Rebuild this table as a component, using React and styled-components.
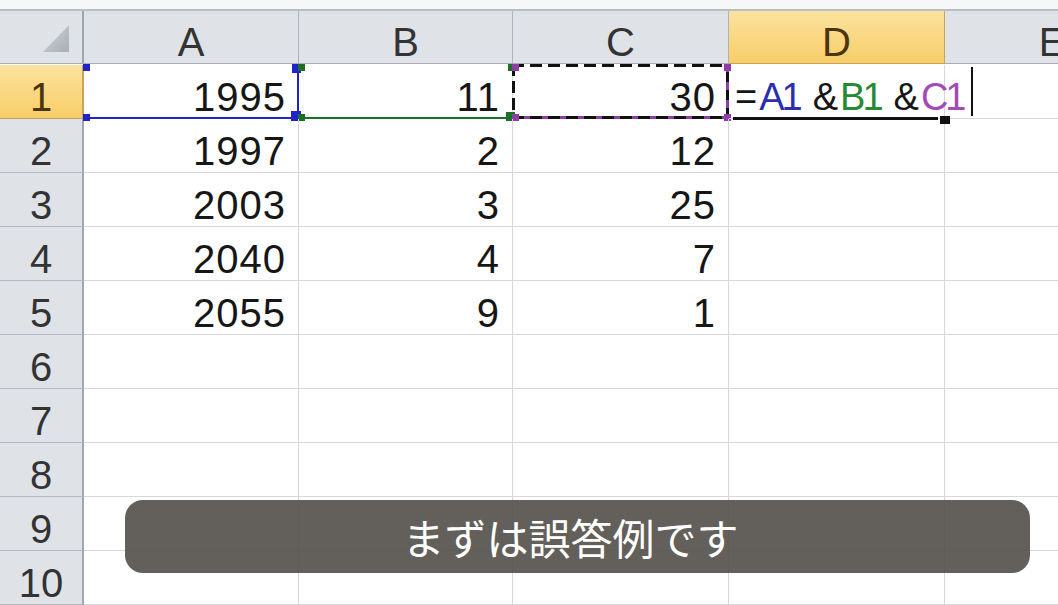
import React from "react";
import styled, { createGlobalStyle, css } from "styled-components";

const GlobalStyle = createGlobalStyle`
  html, body {
    margin: 0;
    padding: 0;
    background: #ffffff;
  }
  body {
    font-family: "Liberation Sans", "Noto Sans CJK JP", sans-serif;
  }
`;

const Page = styled.div`
  position: relative;
  width: 1058px;
  height: 605px;
  overflow: hidden;
  background: #ffffff;
`;

const TopStrip = styled.div`
  height: 9px;
  background: #f6f7f8;
  border-bottom: 2px solid #b9bec4;
`;

const Sheet = styled.div`
  display: grid;
  grid-template-columns: 84px 215px 214px 216px 216px 215px;
  grid-auto-rows: 54px;
  width: 1160px;
  font-size: 40px;
  line-height: 40px;
`;

const HeaderBase = css`
  box-sizing: border-box;
  display: flex;
  justify-content: center;
  align-items: flex-end;
  padding-bottom: 1px;
  color: #333333;
  background: #dfe3e8;
  border-right: 1px solid #aeb3ba;
  border-bottom: 1px solid #a9aeb5;
`;

const selectedHeader = css`
  background: linear-gradient(#fbe39e, #f8cd68);
  color: #4a3510;
  border-color: #c9a35a;
`;

const ColHeader = styled.div`
  ${HeaderBase}
  height: 53px;
  ${(p) => p.$selected && selectedHeader}
`;

const Corner = styled.div`
  ${HeaderBase}
  height: 53px;
  justify-content: flex-end;
  align-items: flex-end;
  padding: 0 12px 10px 0;
  border-right: 2px solid #a0a6ad;
`;

const RowHeader = styled.div`
  ${HeaderBase}
  border-right: 2px solid #a0a6ad;
  border-bottom: 1px solid #b4b9bf;
  ${(p) => p.$selected && selectedHeader}
`;

const Cell = styled.div`
  position: relative;
  box-sizing: border-box;
  display: flex;
  justify-content: flex-end;
  align-items: flex-end;
  padding: 0 12px 1px 0;
  color: #161616;
  letter-spacing: 1px;
  border-right: 1px solid #d6d8db;
  border-bottom: 1px solid #d6d8db;
  white-space: nowrap;
`;

const FormulaCell = styled(Cell)`
  justify-content: flex-start;
  padding: 0 0 1px 6px;
  overflow: visible;
  letter-spacing: 0;
  font-size: 38px;
  z-index: 2;
`;

const Formula = styled.span`
  position: relative;
`;

const Ref = styled.span`
  color: ${(p) => p.$color};
  letter-spacing: -3px;
  margin-left: 2px;
  margin-right: 3px;
`;

const Amp = styled.span`
  margin-left: 10px;
`;

const Caret = styled.span`
  position: absolute;
  left: 242px;
  top: 2px;
  width: 2px;
  height: 49px;
  background: #111111;
`;

const Frame = styled.div`
  position: absolute;
  inset: -1px -1px -1px -1px;
  pointer-events: none;
  ${(p) => p.$right && `border-right: 2px solid ${p.$color};`}
  ${(p) => p.$bottom && `border-bottom: 2px solid ${p.$color};`}
`;

const Handle = styled.span`
  position: absolute;
  width: ${(p) => p.$size || 7}px;
  height: ${(p) => p.$size || 7}px;
  background: ${(p) => p.$color};
  ${(p) => (p.$top ? "top: -1px;" : "bottom: -3px;")}
  ${(p) => (p.$left ? "left: -1px;" : "right: -3px;")}
`;

const Ants = styled.div`
  position: absolute;
  inset: -1px -1px -1px -1px;
  pointer-events: none;
  background:
    repeating-linear-gradient(90deg, #111 0 12px, transparent 12px 18px) top / 100% 3px no-repeat,
    repeating-linear-gradient(90deg, #111 0 12px, #8e3ea4 12px 18px) bottom / 100% 3px no-repeat,
    repeating-linear-gradient(180deg, #111 0 12px, transparent 12px 17px) left / 3px 100% no-repeat,
    repeating-linear-gradient(180deg, #8e3ea4 0 8px, #111 8px 18px) right / 3px 100% no-repeat;
`;

const ActiveUnderline = styled.div`
  position: absolute;
  left: 4px;
  right: 6px;
  bottom: -2px;
  height: 3px;
  background: #111111;
`;

const FillHandle = styled.span`
  position: absolute;
  right: -6px;
  bottom: -6px;
  width: 10px;
  height: 8px;
  background: #111111;
`;

const Caption = styled.div`
  position: absolute;
  left: 125px;
  top: 500px;
  width: 905px;
  height: 73px;
  box-sizing: border-box;
  border-radius: 18px;
  background: rgba(86, 81, 77, 0.92);
  color: #ffffff;
  display: flex;
  align-items: center;
  justify-content: center;
  padding-right: 14px;
  font-family: "Noto Sans CJK JP", sans-serif;
  font-size: 42px;
  font-weight: 400;
`;

const columns = ["A", "B", "C", "D", "E"];
const data = [
  ["1995", "11", "30"],
  ["1997", "2", "12"],
  ["2003", "3", "25"],
  ["2040", "4", "7"],
  ["2055", "9", "1"],
];

function CornerMark() {
  return (
    <svg width="27" height="28" viewBox="0 0 27 28">
      <defs>
        <linearGradient id="cg" x1="0" y1="0" x2="1" y2="1">
          <stop offset="0" stopColor="#d0d4d8" />
          <stop offset="1" stopColor="#a9aeb4" />
        </linearGradient>
      </defs>
      <polygon points="26,0 26,27 0,27" fill="url(#cg)" />
    </svg>
  );
}

export default function App() {
  const rows = Array.from({ length: 10 }, (_, i) => data[i] || ["", "", ""]);
  return (
    <Page>
      <GlobalStyle />
      <TopStrip />
      <Sheet>
        <Corner>
          <CornerMark />
        </Corner>
        {columns.map((c) => (
          <ColHeader key={c} $selected={c === "D"}>
            {c}
          </ColHeader>
        ))}
        {rows.map((r, i) => (
          <React.Fragment key={i}>
            <RowHeader $selected={i === 0}>{i + 1}</RowHeader>
            {i === 0 ? (
              <>
                <Cell>
                  {r[0]}
                  <Frame $right $bottom $color="#1f23c8" />
                  <Handle $top $left $color="#1f23c8" />
                  <Handle $left $color="#1f23c8" />
                  <Handle $top $size={9} $color="#1f23c8" />
                  <Handle $size={10} $color="#1f23c8" />
                </Cell>
                <Cell>
                  {r[1]}
                  <Frame $bottom $color="#1d6e26" />
                  <Handle $top $left $color="#1d6e26" />
                  <Handle $left $color="#1d6e26" />
                  <Handle $top $color="#1d6e26" />
                  <Handle $size={9} $color="#1d6e26" />
                </Cell>
                <Cell>
                  {r[2]}
                  <Ants />
                  <Handle $top $left $color="#8e3ea4" />
                  <Handle $left $color="#8e3ea4" />
                  <Handle $top $color="#8e3ea4" />
                  <Handle $color="#8e3ea4" />
                </Cell>
                <FormulaCell>
                  <Formula>
                    =<Ref $color="#2b2fae">A1</Ref>
                    <Amp>&amp;</Amp>
                    <Ref $color="#268a35">B1</Ref>
                    <Amp>&amp;</Amp>
                    <Ref $color="#a24bb4">C1</Ref>
                  </Formula>
                  <Caret />
                  <ActiveUnderline />
                  <FillHandle />
                </FormulaCell>
                <Cell />
              </>
            ) : (
              <>
                <Cell>{r[0]}</Cell>
                <Cell>{r[1]}</Cell>
                <Cell>{r[2]}</Cell>
                <Cell />
                <Cell />
              </>
            )}
          </React.Fragment>
        ))}
      </Sheet>
      <Caption>まずは誤答例です</Caption>
    </Page>
  );
}
